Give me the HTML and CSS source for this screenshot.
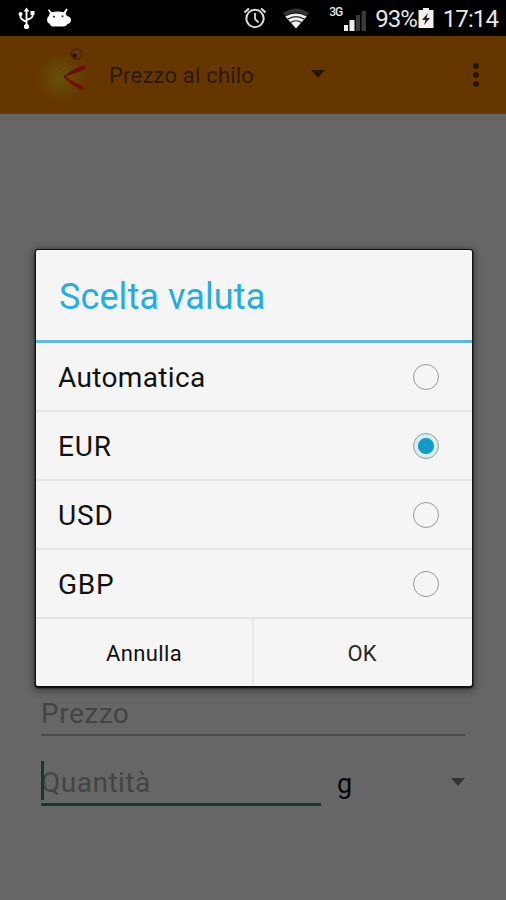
FILE: index.html
```html
<!DOCTYPE html>
<html lang="it">
<head>
<meta charset="utf-8">
<title>Prezzo al chilo</title>
<link rel="stylesheet" href="styles.css">
</head>
<body>
<div class="screen">
  <header class="status">
    <svg class="status-left" width="60" height="36" viewBox="0 0 60 36">
      <g fill="none" stroke="#fff" stroke-width="1.9">
        <path d="M8.500 10v17M2.500 14v3q0 2 6 5M14.500 13v3q0 2-6 4"/>
      </g>
      <g fill="#fff">
        <path d="M8.500 7.500l2.800 4h-5.600z"/><circle cx="8.500" cy="26.500" r="2.600"/><circle cx="2.500" cy="14" r="2"/><path d="M12.500 11h4v4h-4z"/>
        <path d="M32 13.500l-2-3.500 1.300-.7 2.300 3q6-1.500 12 0l2.700-3.800 1.300.7-2 4.300q1 1 1.200 2.500 4 .5 4.200 4 0 3.500-3.600 4-1 2.500-4 2.500h-9.600q-3.500 0-4-2.800-2.700-.7-2.700-3.700.1-3.500 2-4-.3-2 .9-2.500z"/>
      </g>
      <circle cx="36" cy="16.800" r="1" fill="#222"/><circle cx="44.500" cy="16.300" r="1" fill="#222"/>
    </svg>
    <div class="status-right">
      <svg width="24" height="24" viewBox="0 0 24 24" fill="none" stroke="#ddd">
        <circle cx="12" cy="12.500" r="8.700" stroke-width="2"/>
        <path d="M12 7v6l3.500 3.500" stroke-width="1.800"/>
        <path d="M1.500 6.500l4.500-4M22.500 6.500l-4.500-4" stroke-width="2.200"/>
      </svg>
      <svg class="wifi" width="28" height="24" viewBox="0 0 28 24">
        <path d="M1 7Q14-2 27 7l-2.500 3Q14 3 3.500 10z" fill="#333"/>
        <path d="M3.300 10.500Q14 4.500 24.700 10.500L14 22.500z" fill="#eee"/>
        <path d="M5.500 13.200Q14 8 22.500 13.200M8.500 16.500Q14 13 19.500 16.500" fill="none" stroke="#222" stroke-width="1.200"/>
      </svg>
      <span class="net">3G</span>
      <svg class="bars" width="23" height="24" viewBox="0 0 23 24">
        <path d="M0 16h4v6H0zM5.500 11h5v11h-5z" fill="#eee"/><path d="M12 6h4v16h-4zM17.500 2h4.500v20h-4.500z" fill="#3a3a3a"/>
      </svg>
      <span class="pct">93%</span>
      <svg class="battery" width="16" height="24" viewBox="0 0 16 24">
        <path d="M.5 4H5V2h6v2h4.500v18H.5z" fill="#f0f0f0"/><path d="M10 7l-6 7h3.500L6 19l6-7H8.500z" fill="#222"/>
      </svg>
      <span class="clock">17:14</span>
    </div>
  </header>
  <div class="appbar">
    <div class="logo">
      <svg width="70" height="60" viewBox="0 0 70 60">
        <path d="M44 34Q54 25 64.500 23L65 25.500Q53 30 44 34z" fill="#67100a" stroke="#67100a"/>
        <path d="M44 33Q51 42 63 46.500L61.500 43Q51 39 44 33z" fill="#72100a" stroke="#72100a" stroke-width="1.500"/>
        <circle cx="56.500" cy="11" r="5.200" fill="none" stroke="#3f2300" stroke-width="1.200"/><circle cx="54.500" cy="12.500" r="2" fill="#180d00"/>
        <circle cx="40" cy="26" r="1" fill="#563000"/>
      </svg>
    </div>
    <span class="app-title">Prezzo al chilo</span>
    <i class="caret"></i>
    <div class="more"><i></i><i></i><i></i></div>
  </div>
  <main class="form">
    <div class="field price">Prezzo</div>
    <div class="row">
      <div class="field qty">Quantità</div>
      <div class="unit"><span>g</span><i class="caret"></i></div>
    </div>
  </main>
  <section class="dialog">
    <h1>Scelta valuta</h1>
    <ul>
      <li><span class="auto">Automatica</span><i class="radio"></i></li>
      <li><span>EUR</span><i class="radio on"></i></li>
      <li><span>USD</span><i class="radio"></i></li>
      <li><span>GBP</span><i class="radio"></i></li>
    </ul>
    <div class="actions"><button class="cancel">Annulla</button><button class="ok">OK</button></div>
  </section>
</div>
</body>
</html>
```
FILE: styles.css
```css
* { box-sizing: border-box; }
body { margin: 0; font-family: Roboto, "Liberation Sans", sans-serif; }
.screen { position: relative; width: 506px; height: 900px; background: #666; overflow: hidden; display: flex; flex-direction: column; }
.status { height: 36px; background: #000; color: #e6e6e6; display: flex; align-items: center; justify-content: space-between; padding: 0 8px 0 18px; flex: none; }
.status-right { display: flex; align-items: center; height: 36px; }
.wifi { margin-left: 15px; }
.net { font-size: 12px; letter-spacing: -1px; margin: -12px 0 0 19px; font-weight: 500; }
.bars { margin: 5px 0 0 2px; }
.pct { font-size: 24px; margin: 2px 0 0 8px; letter-spacing: -1px; }
.battery { margin-left: 1px; }
.clock { font-size: 24px; margin: 2px 0 0 9px; letter-spacing: -.9px; }
.appbar { height: 78px; flex: none; background: #663600; border-bottom: 1px solid #604020; display: flex; align-items: center; padding: 0 27px 0 20px; }
.logo { width: 70px; height: 60px; background: radial-gradient(circle at 41px 35px, #66520a 0, #66490600 25px); margin-top: -4px; }
.logo svg { display: block; }
.app-title { width: 200px; margin: 2px 0 0 19px; font-size: 22px; letter-spacing: .2px; color: #2e1800; }
.caret { width: 0; height: 0; border: 7px solid transparent; border-top: 8px solid #261500; border-bottom: 0; }
.appbar .caret { margin-left: 2px; margin-top: -2px; }
.more { margin-left: auto; display: flex; flex-direction: column; gap: 3px; margin-top: 1px; }
.more i { width: 6px; height: 6px; border-radius: 50%; background: #261500; }
.form { flex: 1; padding: 576px 41px 0; color: #444; font-size: 28px; }
.field { letter-spacing: .5px; line-height: 34px; }
.price { height: 46px; border-bottom: 2px solid #4c4c4c; padding-top: 7px; }
.row { display: flex; }
.qty { width: 280px; height: 45px; margin-top: 25px; border-bottom: 3px solid #15392f; position: relative; padding-top: 5px; }
.qty::before { content: ""; position: absolute; left: 0; top: 0; width: 3px; height: 39px; background: #16392f; }
.unit { flex: 1; display: flex; align-items: center; justify-content: space-between; margin-left: 16px; margin-top: 25px; color: #080808; font-size: 27px; }
.unit .caret { border-top-color: #333; margin-top: -3px; }
.dialog { position: absolute; left: 36px; top: 250px; width: 436px; height: 436px; background: #f5f5f5; border-radius: 2px; box-shadow: 0 0 0 1px #111, 0 1px 2px 1px #000, 0 2px 8px 2px rgba(0,0,0,.45); display: flex; flex-direction: column; }
h1 { margin: 0; height: 93px; border-bottom: 3px solid #62b8dc; padding: 2px 23px 0; line-height: 91px; font-size: 36px; font-weight: 400; color: #26addc; letter-spacing: .1px; }
ul { list-style: none; margin: 0; padding: 0; }
li { height: 69px; border-bottom: 2px solid #e5e5e5; display: flex; align-items: center; justify-content: space-between; padding: 0 33px 0 22px; font-size: 28px; color: #111; letter-spacing: .8px; }
li span { padding-top: 2px; }
.auto { letter-spacing: .35px; }
.radio { width: 26px; height: 26px; border: 1.500px solid #999; border-radius: 50%; }
.radio.on { background: radial-gradient(circle, #149bca 0 7.500px, #d5eef5 8.500px 100%); }
.actions { display: flex; flex: 1; }
button { flex: 1; border: 0; background: none; font-family: inherit; font-size: 22px; color: #111; padding: 2px 0 0; }
.ok { padding-right: 2px; color: #292929; }
.cancel { border-right: 2px solid #e8e8e8; letter-spacing: .4px; }
```
